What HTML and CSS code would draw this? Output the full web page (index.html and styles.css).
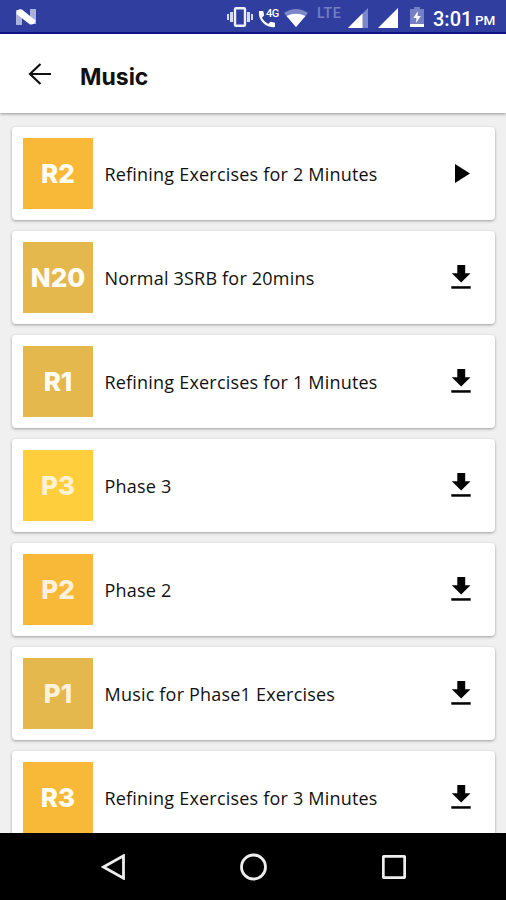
FILE: index.html
```html
<!DOCTYPE html>
<html lang="en">
<head>
    <meta charset="UTF-8">
    <meta name="viewport" content="width=device-width, initial-scale=1.0">
    <title>Music</title>
    <link rel="stylesheet" href="styles.css">
</head>
<body>
    <svg class="sprite" width="0" height="0">
        <symbol id="download" viewBox="0 0 20 24">
            <path d="M6.300 0h7.900v8.300h5.300L10.200 17.600.8 8.300h5.500z"/>
            <path d="M.3 21.200h19.400v2.500H.3z"/>
        </symbol>
    </svg>

    <div class="status-bar">
        <svg class="nougat" width="20" height="16" viewBox="0 0 20 16">
            <path d="M0 1h6v15H0zM14 0h6v15h-6z" fill="#a9b1dc"/>
            <path d="M.5 3.500Q1.500-.5 6 .5L19.500 11.500q-.5 4.500-5.500 4L.5 5z" fill="#fff"/>
        </svg>
        <svg class="vibrate" width="26" height="20" viewBox="0 0 26 20">
            <path d="M0 7h2v6H0zM3 5h3v10H3zM20 5h3v10h-3zM24 7h2v6h-2z" fill="#d5daf3"/>
            <rect x="8" y="1.200" width="10" height="17.600" rx="1" fill="none" stroke="#eef0ff" stroke-width="2.400"/>
        </svg>
        <div class="call">
            <svg width="18" height="18" viewBox="0 0 18 18">
                <path d="M1 1h4.200l1 4.500-2.300 2.300q2 4 6.300 6.300l2.300-2.300 4.500 1V17Q10 18 5 12.800T1 1z" fill="#fff"/>
            </svg>
            <span>4G</span>
        </div>
        <svg class="wifi" width="24" height="18" viewBox="0 0 24 18">
            <path d="M0 4Q12-4 24 4L12 18z" fill="#7c87c8"/>
            <path d="M2.500 7Q12 2.500 21.500 7L12 18z" fill="#fff"/>
        </svg>
        <span class="lte">LTE</span>
        <svg class="signal" width="20" height="20" viewBox="0 0 20 20">
            <path d="M0 20L20 0v20z" fill="#7c87c8"/>
            <path d="M0 20L14.500 5.500V20z" fill="#fff"/>
        </svg>
        <svg class="signal" width="20" height="20" viewBox="0 0 20 20">
            <path d="M0 20L20 0v20z" fill="#fff"/>
        </svg>
        <svg class="battery" width="14" height="20" viewBox="0 0 14 20">
            <path d="M4 0h6v2h4v18H0V2h4z" fill="#7580c3"/>
            <path d="M0 17h14v3H0zM8 4L3.300 11H6.500L6 16l4.800-7H7.500z" fill="#fff"/>
        </svg>
        <span class="time">3:01</span>
        <span class="pm">PM</span>
    </div>

    <div class="header">
        <svg width="24" height="22" viewBox="0 0 24 22">
            <path d="M12.500 1L2 11l10.500 10M2 11h21" fill="none" stroke="#111" stroke-width="2.200"/>
        </svg>
        <h1>Music</h1>
    </div>

    <div class="list">
        <div class="card">
            <div class="thumb orange">R2</div>
            <p>Refining Exercises for 2 Minutes</p>
            <svg class="play" width="15" height="19" viewBox="0 0 15 19"><path d="M0 0l15 9.500L0 19z"/></svg>
        </div>
        <div class="card">
            <div class="thumb sand">N20</div>
            <p>Normal 3SRB for 20mins</p>
            <svg class="download"><use href="#download"/></svg>
        </div>
        <div class="card">
            <div class="thumb sand">R1</div>
            <p>Refining Exercises for 1 Minutes</p>
            <svg class="download"><use href="#download"/></svg>
        </div>
        <div class="card">
            <div class="thumb yellow">P3</div>
            <p>Phase 3</p>
            <svg class="download"><use href="#download"/></svg>
        </div>
        <div class="card">
            <div class="thumb orange faded">P2</div>
            <p>Phase 2</p>
            <svg class="download"><use href="#download"/></svg>
        </div>
        <div class="card">
            <div class="thumb sand faded">P1</div>
            <p>Music for Phase1 Exercises</p>
            <svg class="download"><use href="#download"/></svg>
        </div>
        <div class="card">
            <div class="thumb orange">R3</div>
            <p>Refining Exercises for 3 Minutes</p>
            <svg class="download"><use href="#download"/></svg>
        </div>
    </div>

    <div class="nav-bar">
        <svg width="24" height="26" viewBox="0 0 24 26"><path d="M22.500 1.800v22.400L2.500 13z"/></svg>
        <svg width="28" height="28" viewBox="0 0 28 28"><circle cx="13.500" cy="14" r="12"/></svg>
        <svg width="24" height="24" viewBox="0 0 24 24"><rect x="1.300" y="1.300" width="21.400" height="21.400" rx="1"/></svg>
    </div>
</body>
</html>
```
FILE: styles.css
```css
* { box-sizing: border-box; }
body { margin: 0; height: 900px; display: flex; flex-direction: column; overflow: hidden; background: #f0f0f0; font-family: "Open Sans", sans-serif; color: #111; }
.sprite { display: none; }

.status-bar { height: 34px; flex: none; display: flex; align-items: flex-start; padding: 7px 8px 0 16px; background: #303f9f; border-bottom: 2px solid #10128f; color: #fff; font-family: Roboto, sans-serif; }
.status-bar svg { display: block; flex: none; }
.nougat { margin-top: 2px; }
.vibrate { margin-left: 191px; }
.call { position: relative; width: 20px; margin: 3px 0 0 5px; }
.call span { position: absolute; left: 8px; top: -2px; font-size: 11px; line-height: 11px; font-weight: 500; letter-spacing: -0.5px; }
.wifi { margin: 2px 0 0 6px; }
.lte { width: 25px; margin: 0 0 0 9px; font-size: 14px; line-height: 13px; letter-spacing: 0.7px; font-weight: 500; color: #7480c4; }
.signal { margin: 1px 0 0 6px; }
.signal + .signal { margin-left: 10px; }
.battery { margin-left: 12px; }
.time { margin-left: 9px; width: 38px; font-size: 20px; line-height: 24px; font-weight: 500; }
.pm { margin: 5px 0 0 4px; font-size: 13.5px; line-height: 17px; font-weight: 500; }

.header { position: relative; height: 79px; flex: none; display: flex; align-items: center; padding-left: 28px; background: #fff; box-shadow: 0 1px 3px rgba(0, 0, 0, 0.4); }
.header h1 { margin: 6px 0 0 28px; font-family: Inter, sans-serif; font-size: 23px; line-height: 30px; font-weight: bold; }

.list { flex: 1; min-height: 0; overflow: hidden; padding: 14px 11px 0 12px; }
.card { height: 93px; display: flex; align-items: center; margin-bottom: 11px; padding: 0 24px 0 11px; background: #fff; border-radius: 4px; box-shadow: 0 1px 3px rgba(0, 0, 0, 0.35); }
.card p { flex: 1; margin: 0 0 0 11.5px; font-size: 18px; letter-spacing: 0.2px; white-space: nowrap; }
.thumb { width: 70px; height: 71px; flex: none; display: flex; align-items: center; justify-content: center; color: #fffdf5; font-family: Inter, sans-serif; font-size: 26px; font-weight: 800; }
.orange { background: #f8b938; }
.sand { background: #e5b84d; }
.yellow { background: #ffce3d; color: #fff2d2; }
.faded { color: #fdf1dc; }
.download { width: 20px; height: 24px; margin-bottom: 2px; }
.play { margin-right: 1px; }

.nav-bar { height: 67px; flex: none; display: flex; align-items: center; justify-content: space-between; padding: 0 100px 0 101px; background: #000; }
.nav-bar svg { fill: none; stroke: #eee; stroke-width: 2.8; }
```
